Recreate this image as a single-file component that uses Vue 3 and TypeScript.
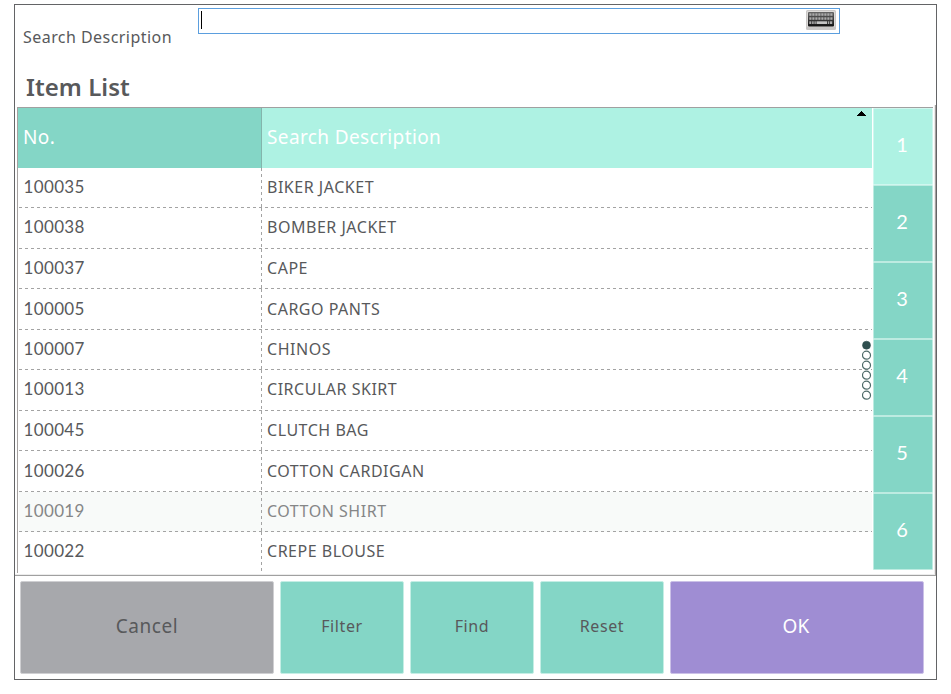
<script setup lang="ts">
import { ref } from 'vue'

interface Item {
  no: string
  description: string
}

const items: Item[] = [
  { no: '100035', description: 'BIKER JACKET' },
  { no: '100038', description: 'BOMBER JACKET' },
  { no: '100037', description: 'CAPE' },
  { no: '100005', description: 'CARGO PANTS' },
  { no: '100007', description: 'CHINOS' },
  { no: '100013', description: 'CIRCULAR SKIRT' },
  { no: '100045', description: 'CLUTCH BAG' },
  { no: '100026', description: 'COTTON CARDIGAN' },
  { no: '100019', description: 'COTTON SHIRT' },
  { no: '100022', description: 'CREPE BLOUSE' },
]

const pages = [1, 2, 3, 4, 5, 6]
const currentPage = ref(1)
const selected = ref('100019')

// Key columns for each row of the keyboard glyph
const keyRows = [
  { y: 3, x: [2, 5, 8, 11, 14, 17, 20, 23] },
  { y: 7, x: [2, 5, 8, 11, 14, 17, 20, 23] },
]
</script>

<template>
  <main class="window">
    <section class="search">
      <label class="search-label">Search Description</label>
      <div class="search-box">
        <span class="caret"></span>
        <svg class="keyboard" width="30" height="20" viewBox="0 0 30 20">
          <defs>
            <linearGradient id="kb" x1="0" y1="0" x2="0" y2="1">
              <stop offset="0" stop-color="#666" />
              <stop offset="1" stop-color="#111" />
            </linearGradient>
          </defs>
          <rect width="30" height="20" rx="1.5" fill="#c9c7c6" />
          <rect x="1" y="1" width="28" height="16" rx="1" fill="#dedcda" />
          <rect x="2" y="2" width="26" height="14.5" rx="1" fill="url(#kb)" />
          <g v-for="row in keyRows" :key="row.y" fill="#aaa">
            <rect v-for="x in row.x" :key="x" :x="x + 1.3" :y="row.y + 0.3" width="2.2" height="2.5" />
          </g>
          <g fill="#aaa">
            <rect x="3.3" y="11.3" width="2" height="2.7" />
            <rect x="6.1" y="11.3" width="1.6" height="2.7" />
            <rect x="8.4" y="11.3" width="1.4" height="2.7" />
            <rect x="10.5" y="11.3" width="10.5" height="2.7" fill="#c4c4c4" />
            <rect x="21.8" y="11.3" width="1.5" height="2.7" />
            <rect x="24" y="11.3" width="2.2" height="2.7" />
          </g>
        </svg>
      </div>
    </section>

    <h1 class="title">Item List</h1>

    <section class="list">
      <div class="table">
        <div class="head">
          <div class="col-no">No.</div>
          <div class="col-desc sorted">Search Description
            <svg class="sort" width="9" height="5" viewBox="0 0 9 5" shape-rendering="crispEdges">
              <path d="M4 0h1v1h1v1h1v1h1v1h1v1H0V4h1V3h1V2h1V1h1z" />
            </svg>
          </div>
        </div>
        <div
          v-for="item in items"
          :key="item.no"
          class="row"
          :class="{ selected: item.no === selected }"
          @click="selected = item.no"
        >
          <div class="col-no">{{ item.no }}</div>
          <div class="col-desc">{{ item.description }}</div>
        </div>
        <svg class="dots" width="10" height="60" viewBox="0 0 10 60">
          <circle
            v-for="(p, i) in pages"
            :key="p"
            cx="4.5"
            :cy="5.2 + i * 10"
            r="4"
            :class="{ on: p === currentPage }"
          />
        </svg>
      </div>
      <nav class="pages">
        <button
          v-for="p in pages"
          :key="p"
          class="page"
          :class="{ active: p === currentPage }"
          @click="currentPage = p"
        >{{ p }}</button>
      </nav>
    </section>

    <footer class="actions">
      <button class="action cancel">Cancel</button>
      <button class="action small">Filter</button>
      <button class="action small">Find</button>
      <button class="action small">Reset</button>
      <button class="action ok">OK</button>
    </footer>
  </main>
</template>

<style>
body {
  background: #fff;
}
</style>

<style scoped>
* {
  box-sizing: border-box;
}
.window {
  width: 923px;
  height: 676px;
  margin: 4px 0 0 14px;
  border: 1px solid #636466;
  color: #58595b;
  font-family: 'Noto Sans', 'Open Sans', sans-serif;
  display: flex;
  flex-direction: column;
}
.search {
  height: 60px;
  flex: none;
  display: flex;
  padding: 3px 0 0 8px;
}
.search-label {
  width: 175px;
  padding-top: 17px;
  font-size: 16px;
  line-height: 24px;
  letter-spacing: 0.45px;
  white-space: nowrap;
}
.search-box {
  width: 642px;
  height: 26px;
  border: 1px solid #5b9ede;
  display: flex;
  justify-content: space-between;
  padding: 1px 3px 0 2px;
}
.caret {
  width: 1px;
  height: 18px;
  margin-top: 1px;
  background: #000;
}
.keyboard {
  display: block;
}
.title {
  margin: 0;
  height: 40px;
  flex: none;
  padding: 4px 0 0 11px;
  font-size: 24px;
  line-height: 36px;
  font-weight: 600;
  letter-spacing: 0.05px;
}
.list {
  height: 471px;
  flex: none;
  display: flex;
  padding: 2px 2px 0 2px;
  border-right: 1px solid #a5a1a0;
  border-bottom: 1px solid #a0a0a0;
  box-shadow: inset -1px -1px 0 #ececec;
}
.table {
  position: relative;
  width: 855px;
  flex: none;
  height: 466px;
  border-left: 1px solid #a5a1a0;
  border-top: 1px solid #a0a0a0;
}
.head {
  display: flex;
  height: 60px;
  color: #fff;
  font-size: 19px;
  line-height: 58px;
  letter-spacing: 0.38px;
}
.head .col-no {
  background: #84d6c6;
  border-right: 1px solid #83b5ac;
}
.col-no {
  width: 244px;
  flex: none;
  padding-left: 5px;
}
.col-desc {
  flex: 1;
  padding-left: 5px;
  white-space: nowrap;
}
.sorted {
  position: relative;
  background: #aef2e3;
}
.sort {
  position: absolute;
  right: 6px;
  top: 3px;
  fill: #000;
}
.row {
  display: flex;
  height: 40px;
  margin-left: 1px;
  font-size: 16px;
  line-height: 38px;
  letter-spacing: 0.52px;
  background: repeating-linear-gradient(90deg, #a3a3a3 0 3px, transparent 3px 6px) 0 100% / 100% 1px no-repeat;
}
.row:nth-child(odd) {
  height: 41px;
}
.row:nth-child(4n + 5) {
  line-height: 40px;
}
.row:nth-child(11) {
  background: none;
}
.row .col-no {
  width: 243px;
  padding-left: 4.5px;
  font-family: Lato, 'Noto Sans', sans-serif;
  font-size: 17px;
  letter-spacing: 0.35px;
  background: repeating-linear-gradient(180deg, #a3a3a3 0 3px, transparent 3px 6px) 100% 0 / 1px 100% no-repeat;
}
.row.selected {
  background-color: #f8faf9;
  color: #858687;
}
.dots {
  position: absolute;
  right: 0;
  top: 232px;
}
.dots circle {
  fill: #fff;
  stroke: #4d6a68;
  stroke-width: 1.2;
}
.dots circle.on {
  fill: #2f4f4f;
  stroke: #2f4f4f;
  stroke-width: 0.6;
}
.pages {
  width: 61px;
  flex: none;
  padding-left: 1px;
  border-top: 1px solid #a0a0a0;
}
.page {
  display: block;
  width: 60px;
  height: 77px;
  padding: 0 2px 5px 0;
  border: 1px solid #bdebe1;
  border-radius: 1px;
  background: #84d6c6;
  color: #fff;
  font-family: Lato, 'Noto Sans', sans-serif;
  font-size: 20px;
}
.page.active {
  background: #aef2e3;
  border-color: #cff7ef;
}
.actions {
  display: flex;
  gap: 6px;
  padding: 5px 0 0 5px;
}
.action {
  width: 254px;
  height: 93px;
  padding: 0 0 3px;
  border: 1px solid #c5eee5;
  border-radius: 2px;
  background: #84d6c6;
  color: #58595b;
  font-family: inherit;
  font-size: 19px;
  letter-spacing: 0.6px;
}
.action.small {
  width: 124px;
  font-size: 16px;
}
.action.cancel {
  background: #a7a8ac;
  border-color: #cfcfd2;
}
.action.ok {
  padding-right: 2px;
  background: #9f8dd3;
  border-color: #cbc1e7;
  color: #fff;
  letter-spacing: 0.2px;
}
</style>
